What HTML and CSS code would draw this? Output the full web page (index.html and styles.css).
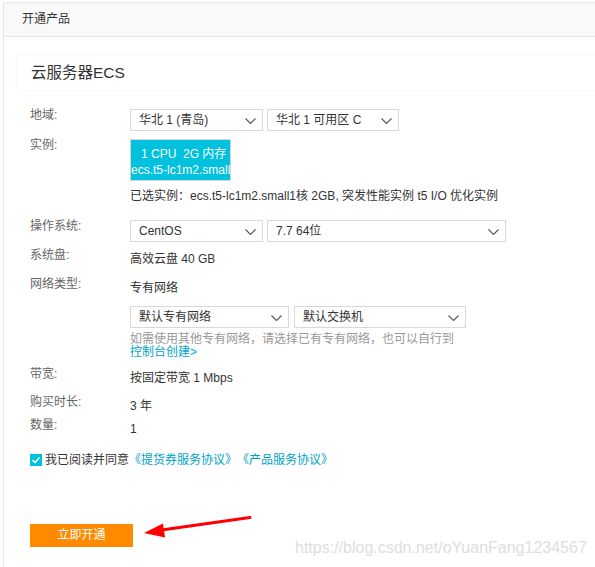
FILE: index.html
```html
<!DOCTYPE html>
<html lang="zh-CN">
<head>
<meta charset="utf-8">
<title>开通产品</title>
<link rel="stylesheet" href="styles.css">
</head>
<body>
<div class="panel">
  <div class="panel-head">开通产品</div>
  <div class="panel-body">
    <div class="card-title">云服务器ECS</div>
    <div class="form">
      <div class="row r-region">
        <div class="label">地域:</div>
        <div class="value">
          <div class="selects">
            <div class="select w133">华北 1 (青岛)<svg class="chev" viewBox="0 0 11 6"><polyline points="0.5,0.5 5.5,5.5 10.5,0.5"/></svg></div>
            <div class="select w132">华北 1 可用区 C<svg class="chev" viewBox="0 0 11 6"><polyline points="0.5,0.5 5.5,5.5 10.5,0.5"/></svg></div>
          </div>
        </div>
      </div>
      <div class="row r-instance">
        <div class="label">实例:</div>
        <div class="value">
          <div class="instance">
            <div class="inst-l1">1 CPU&nbsp;&nbsp;2G 内存</div>
            <div class="inst-l2">ecs.t5-lc1m2.small</div>
          </div>
          <div class="text chosen">已选实例：ecs.t5-lc1m2.small1核 2GB, 突发性能实例 t5 I/O 优化实例</div>
        </div>
      </div>
      <div class="row r-os">
        <div class="label">操作系统:</div>
        <div class="value">
          <div class="selects">
            <div class="select w133">CentOS<svg class="chev" viewBox="0 0 11 6"><polyline points="0.5,0.5 5.5,5.5 10.5,0.5"/></svg></div>
            <div class="select w239">7.7 64位<svg class="chev" viewBox="0 0 11 6"><polyline points="0.5,0.5 5.5,5.5 10.5,0.5"/></svg></div>
          </div>
        </div>
      </div>
      <div class="row r-disk">
        <div class="label">系统盘:</div>
        <div class="value"><div class="text">高效云盘 40 GB</div></div>
      </div>
      <div class="row r-net">
        <div class="label">网络类型:</div>
        <div class="value">
          <div class="text">专有网络</div>
          <div class="selects net-selects">
            <div class="select w159">默认专有网络<svg class="chev" viewBox="0 0 11 6"><polyline points="0.5,0.5 5.5,5.5 10.5,0.5"/></svg></div>
            <div class="select w172">默认交换机<svg class="chev" viewBox="0 0 11 6"><polyline points="0.5,0.5 5.5,5.5 10.5,0.5"/></svg></div>
          </div>
          <div class="hint">如需使用其他专有网络，请选择已有专有网络，也可以自行到<br><a class="link" href="#">控制台创建&gt;</a></div>
        </div>
      </div>
      <div class="row r-bw">
        <div class="label">带宽:</div>
        <div class="value"><div class="text">按固定带宽 1 Mbps</div></div>
      </div>
      <div class="row r-time">
        <div class="label">购买时长:</div>
        <div class="value"><div class="text">3 年</div></div>
      </div>
      <div class="row r-num">
        <div class="label">数量:</div>
        <div class="value"><div class="text">1</div></div>
      </div>
      <div class="agree">
        <span class="checkbox"><svg viewBox="0 0 12 12"><polyline points="2.5,6 5,8.5 9.5,3.5"/></svg></span>
        <span class="agree-text">我已阅读并同意</span><a class="link" href="#">《提货券服务协议》</a><a class="link" href="#">《产品服务协议》</a>
      </div>
      <button class="btn">立即开通</button>
    </div>
  </div>
</div>
<svg class="arrow" width="595" height="567" viewBox="0 0 595 567">
  <line x1="250" y1="517.5" x2="158" y2="530.5"/>
  <polygon points="144,533 163,523.5 165,537.5"/>
</svg>
<div class="watermark">https://blog.csdn.net/oYuanFang1234567</div>
</body>
</html>
```
FILE: styles.css
```css
html, body {
  margin: 0;
  padding: 0;
  background: #fff;
  overflow: hidden;
}
body {
  font-family: "Liberation Sans", "Noto Sans CJK SC", sans-serif;
  font-size: 12px;
  color: #333;
  position: relative;
  width: 595px;
  height: 567px;
}
.panel {
  margin: 2px 0 0 3px;
  border-left: 1px solid #e6e6e6;
  border-top: 1px solid #e6e6e6;
  height: 565px;
  box-sizing: border-box;
}
.panel-head {
  height: 33px;
  line-height: 33px;
  padding-left: 18px;
  background: #f9f9f9;
  border-bottom: 1px solid #e6e6e6;
  color: #333;
}
.panel-body {
  padding: 18px 0 0 13px;
}
.card-title {
  height: 35px;
  line-height: 35px;
  padding-left: 14px;
  margin-right: -12px;
  font-size: 15.5px;
  color: #333;
  box-shadow: 0 0 4px rgba(0, 0, 0, 0.06);
}
.form {
  padding: 19px 0 0 13px;
}
.row {
  display: flex;
  align-items: flex-start;
}
.label {
  width: 100px;
  flex: none;
  line-height: 12px;
  color: #666;
}
.value {
  flex: 1;
}
.text {
  line-height: 20px;
  color: #333;
}
.selects {
  display: flex;
  gap: 4px;
}
.net-selects {
  gap: 5px;
  margin-top: 8px;
}
.select {
  position: relative;
  box-sizing: border-box;
  height: 22px;
  line-height: 20px;
  border: 1px solid #d9d9d9;
  padding-left: 8px;
  color: #333;
  background: #fff;
}
.chev {
  position: absolute;
  right: 6px;
  top: 8px;
  width: 11px;
  height: 6px;
  fill: none;
  stroke: #555;
  stroke-width: 1.1;
}
.w133 { width: 133px; }
.w132 { width: 132px; }
.w239 { width: 239px; }
.w159 { width: 159px; }
.w172 { width: 172px; }

.r-region { margin-bottom: 8px; }
.r-instance { margin-bottom: 14px; }
.r-os { margin-bottom: 7px; }
.r-disk { margin-bottom: 9px; }
.r-net { margin-bottom: 9px; }
.r-bw { margin-bottom: 8px; }
.r-time { margin-bottom: 3px; }

.instance {
  width: 101px;
  height: 42px;
  box-sizing: border-box;
  padding: 6px 0 3px;
  border: 1px solid #d6d6d6;
  background: #00c1de;
  color: #fff;
  font-size: 12px;
  line-height: 16px;
  white-space: nowrap;
  overflow: hidden;
}
.inst-l1 {
  padding-left: 10px;
}
.inst-l2 {
  padding-left: 0;
}
.chosen {
  margin-top: 5px;
}
.hint {
  margin-top: 5px;
  line-height: 13px;
  color: #999;
}
.link {
  color: #00a2ca;
  text-decoration: none;
}
.agree {
  display: flex;
  align-items: center;
  height: 20px;
  margin-top: 11px;
  line-height: 20px;
}
.checkbox {
  width: 12px;
  height: 12px;
  background: #00c1de;
  margin-right: 3px;
  display: flex;
}
.checkbox svg {
  width: 12px;
  height: 12px;
  fill: none;
  stroke: #fff;
  stroke-width: 1.6;
}
.agree-text {
  color: #333;
}
.btn {
  display: block;
  margin-top: 54px;
  width: 103px;
  height: 23px;
  border: 0;
  padding: 0;
  background: #ff8a00;
  color: #fff;
  font-family: "Liberation Sans", "Noto Sans CJK SC", sans-serif;
  font-size: 12px;
  line-height: 23px;
  cursor: pointer;
}
.arrow {
  position: absolute;
  left: 0;
  top: 0;
  pointer-events: none;
}
.arrow line {
  stroke: #f00;
  stroke-width: 3;
  stroke-linecap: round;
}
.arrow polygon {
  fill: #f00;
}
.watermark {
  position: absolute;
  left: 295px;
  top: 539px;
  font-family: "Liberation Sans", sans-serif;
  font-size: 16px;
  line-height: 18px;
  color: #dedede;
  white-space: nowrap;
}
```
